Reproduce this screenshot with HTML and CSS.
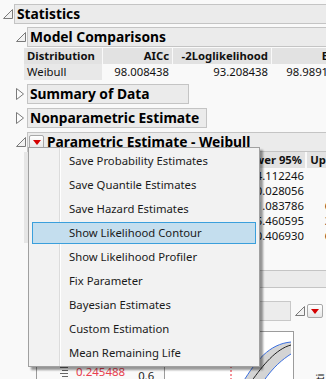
FILE: index.html
```html
<!DOCTYPE html>
<html>
<head>
<meta charset="utf-8">
<link rel="stylesheet" href="styles.css">
</head>
<body>
<div class="page">
  <div class="ohead">
    <span class="tog"><svg width="10" height="10" viewBox="0 0 10 10"><polygon points="0.5,9.5 9.5,0.5 9.5,9.5" fill="#f2f2f2" stroke="#7a7a7a"/></svg></span>
    <div class="obox grow">Statistics</div>
  </div>
  <div class="indent">
    <div class="ohead gap3">
      <span class="tog"><svg width="10" height="10" viewBox="0 0 10 10"><polygon points="0.5,9.5 9.5,0.5 9.5,9.5" fill="#f2f2f2" stroke="#7a7a7a"/></svg></span>
      <div class="obox grow">Model Comparisons</div>
    </div>
  </div>
  <div class="mctable">
    <div class="c hd">Distribution</div>
    <div class="c hd num">AICc</div>
    <div class="c hd num">-2Loglikelihood</div>
    <div class="c hd num">BIC</div>
    <div class="c lab">Weibull</div>
    <div class="c num">98.008438</div>
    <div class="c num">93.208438</div>
    <div class="c num">98.989138</div>
  </div>
  <div class="indent">
    <div class="ohead gap4">
      <span class="tog"><svg width="8" height="12" viewBox="0 0 8 12"><polygon points="0.5,0.5 7.5,6 0.5,11.5" fill="#fdfdfd" stroke="#7a7a7a"/></svg></span>
      <div class="obox w-summary">Summary of Data</div>
    </div>
    <div class="ohead gap4">
      <span class="tog"><svg width="8" height="12" viewBox="0 0 8 12"><polygon points="0.5,0.5 7.5,6 0.5,11.5" fill="#fdfdfd" stroke="#7a7a7a"/></svg></span>
      <div class="obox w-nonpar">Nonparametric Estimate</div>
    </div>
    <div class="ohead gap4">
      <span class="tog"><svg width="10" height="10" viewBox="0 0 10 10"><polygon points="0.5,9.5 9.5,0.5 9.5,9.5" fill="#f2f2f2" stroke="#7a7a7a"/></svg></span>
      <div class="obox grow withbtn"><span class="rbtn"><svg width="8" height="5" viewBox="0 0 8 5"><polygon points="0,0 8,0 4,5" fill="#d40000"/></svg></span><span>Parametric Estimate - Weibull</span></div>
    </div>
  </div>
  <div class="ptable">
    <div class="c lab2"></div><div class="c hd"></div><div class="c hd"></div><div class="c hd num">Lower 95%</div><div class="c hd num">Upper 95%</div>
    <div class="c lab2"></div><div class="c"></div><div class="c"></div><div class="c num">4.112246</div><div class="c num">9.21</div>
    <div class="c lab2"></div><div class="c"></div><div class="c"></div><div class="c num">0.028056</div><div class="c num">0.52</div>
    <div class="c lab2"></div><div class="c"></div><div class="c"></div><div class="c num">1.083786</div><div class="c num">6.914430</div>
    <div class="c lab2"></div><div class="c"></div><div class="c"></div><div class="c num">5.460595</div><div class="c num">31.52790</div>
    <div class="c lab2"></div><div class="c"></div><div class="c"></div><div class="c num">0.406930</div><div class="c num">6.280415</div>
  </div>
  <div class="band"></div>
  <div class="plotrow">
    <div class="pbox"></div>
    <span class="tog2"><svg width="10" height="10" viewBox="0 0 10 10"><polygon points="0.5,9.5 9.5,0.5 9.5,9.5" fill="#f2f2f2" stroke="#7a7a7a"/></svg></span>
    <span class="rbtn rbtn2"><svg width="8" height="5" viewBox="0 0 8 5"><polygon points="0,0 8,0 4,5" fill="#d40000"/></svg></span>
  </div>
  <div class="graph">
    <div class="axis">
      <span class="refic"><svg width="8" height="11" viewBox="0 0 8 11"><path d="M0 1.5H8M2 4.5H8M0 7.5H8M2 10.5H8" stroke="#666" stroke-width="1"/></svg></span>
      <span class="redval">0.245488</span>
      <span class="tick">0.6</span>
    </div>
    <div class="plot">
      <svg width="130" height="50" viewBox="0 0 130 50">
        <path d="M78 50 C91 29 104 12 126 10 L126 22 C118 27 108 35 98 50 Z" fill="#d4d4d4"/>
        <path d="M78 50 C91 29 104 12 126 10" fill="none" stroke="#3b6fe0" stroke-width="1"/>
        <path d="M98 50 C108 35 118 27 126 22" fill="none" stroke="#3b6fe0" stroke-width="1"/>
        <path d="M86 50 C98 33 111 17 126 13" fill="none" stroke="#222" stroke-width="1"/>
        <path d="M66 34 V50" stroke="#e23" stroke-dasharray="2 2" stroke-width="1"/>
      </svg>
    </div>
    <div class="side"><span class="vtext">ti</span></div>
  </div>
</div>

<div class="menu">
  <div class="mi">Save Probability Estimates</div>
  <div class="mi">Save Quantile Estimates</div>
  <div class="mi">Save Hazard Estimates</div>
  <div class="mi hl">Show Likelihood Contour</div>
  <div class="mi">Show Likelihood Profiler</div>
  <div class="mi">Fix Parameter</div>
  <div class="mi">Bayesian Estimates</div>
  <div class="mi">Custom Estimation</div>
  <div class="mi">Mean Remaining Life</div>
</div>
</body>
</html>
```

FILE: styles.css
```css
html, body {
  margin: 0;
  padding: 0;
}
body {
  background: #f9f9f9;
  font-family: "Noto Sans", "DejaVu Sans", sans-serif;
  color: #111;
  width: 326px;
  height: 379px;
  overflow: hidden;
  position: relative;
}
.page {
  padding-top: 4px;
  width: 326px;
}
.indent {
  margin-left: 13px;
}
.ohead {
  display: flex;
  align-items: center;
  height: 20px;
}
.gap3 { margin-top: 3px; }
.gap4 { margin-top: 4px; }
.tog {
  width: 11px;
  padding-left: 3px;
  display: flex;
  align-items: center;
}
.obox {
  box-sizing: border-box;
  height: 20px;
  border: 1px solid #c4c4c4;
  background: #ebebeb;
  padding-left: 2px;
  font-weight: bold;
  font-size: 13.8px;
  line-height: 18px;
  color: #000;
  white-space: nowrap;
  overflow: hidden;
}
.grow {
  flex: 1;
  border-right: none;
}
.w-summary { width: 162px; }
.w-nonpar { width: 180px; }
.withbtn {
  display: flex;
  align-items: center;
  padding-left: 1px;
}
.rbtn {
  box-sizing: border-box;
  width: 15px;
  height: 14px;
  border: 1px solid #a8a8a8;
  border-radius: 2px;
  background: linear-gradient(#ffffff, #e6e6e6);
  display: flex;
  align-items: center;
  justify-content: center;
  margin-right: 3px;
}
.mctable {
  margin-left: 24px;
  margin-top: 1px;
  display: grid;
  grid-template-columns: 78px 69px 98px 72px;
  grid-auto-rows: 16px;
  column-gap: 1px;
  font-size: 11.3px;
  line-height: 16px;
}
.c {
  white-space: nowrap;
  overflow: hidden;
  padding: 0 3px;
}
.hd {
  background: #e2e2e2;
  font-weight: bold;
}
.lab {
  background: #e8e8e8;
}
.num {
  text-align: right;
}
.ptable {
  margin-left: 24px;
  display: grid;
  grid-template-columns: 78px 70px 62px 65px 67px;
  grid-template-rows: 16px;
  grid-auto-rows: 15px;
  column-gap: 2px;
  font-size: 11.3px;
  line-height: 15px;
}
.ptable .hd {
  line-height: 16px;
  margin-bottom: 2px;
}
.ptable > .c:nth-child(-n+5) {
  height: 16px;
}
.ptable .num {
  padding: 0 1px;
}
.ptable .hd.num {
  padding-right: 3px;
}
.lab2 {
  background: #e6e6e6;
}
.band {
  margin-top: 27px;
  margin-left: 36px;
  height: 18px;
  box-sizing: border-box;
  border-top: 1px solid #c4c4c4;
  border-bottom: 1px solid #c4c4c4;
  background: #ebebeb;
}
.plotrow {
  display: flex;
  align-items: center;
  margin-top: 13px;
  margin-left: 36px;
  height: 20px;
}
.pbox {
  box-sizing: border-box;
  width: 260px;
  height: 20px;
  border: 1px solid #c8c8c8;
  background: #ececec;
}
.tog2 {
  margin-left: 4px;
  width: 10px;
  display: flex;
}
.rbtn2 {
  margin-left: 2px;
  width: 16px;
}
.graph {
  margin-top: 10px;
  margin-left: 36px;
  display: flex;
  border-left: 1px solid #9a9a9a;
  height: 60px;
}
.axis {
  width: 127px;
  display: flex;
  align-items: flex-start;
  padding-top: 35px;
  box-sizing: border-box;
}
.refic {
  margin-left: 23px;
  display: flex;
}
.redval {
  margin-left: 8px;
  color: #e8404f;
  font-size: 11.5px;
  line-height: 12px;
}
.tick {
  margin-left: 13px;
  margin-top: 4px;
  font-size: 11.3px;
  line-height: 12px;
  color: #222;
}
.plot {
  box-sizing: border-box;
  width: 131px;
  height: 60px;
  border: 1px solid #9c9c9c;
  background: #ffffff;
  overflow: hidden;
}
.plot svg {
  display: block;
}
.side {
  width: 32px;
  position: relative;
}
.vtext {
  display: block;
  margin-left: 20px;
  margin-top: 37px;
  transform: rotate(-90deg);
  font-size: 11px;
  width: 10px;
}
.menu {
  position: absolute;
  left: 28px;
  top: 147px;
  width: 232px;
  height: 220px;
  box-sizing: border-box;
  border: 1px solid #a0a0a0;
  background: #f2f2f2;
  padding: 2px 3px 0 3px;
  box-shadow: 3px 3px 2px rgba(0, 0, 0, 0.4);
  font-size: 11.3px;
}
.menu::before {
  content: "";
  position: absolute;
  left: 30px;
  top: 0;
  bottom: 0;
  width: 1px;
  background: #dcdcdc;
  border-right: 1px solid #ffffff;
}
.mi {
  position: relative;
  box-sizing: border-box;
  height: 22px;
  margin-bottom: 2px;
  line-height: 20px;
  padding-left: 36px;
  border: 1px solid transparent;
  color: #1a1a1a;
  white-space: nowrap;
}
.hl {
  background: #c4deee;
  border-color: #3a9fdc;
}
```
